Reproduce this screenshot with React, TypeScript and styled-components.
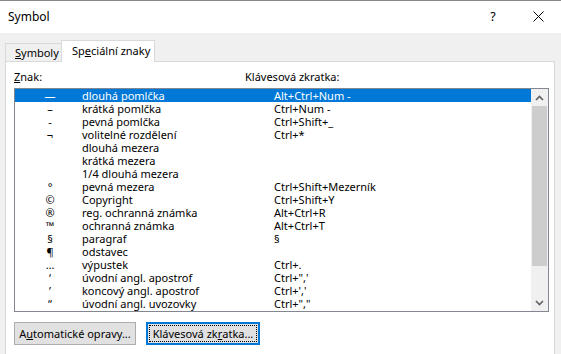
import React from 'react';
import styled, { createGlobalStyle } from 'styled-components';

const GlobalStyle = createGlobalStyle`
  html, body {
    margin: 0;
    padding: 0;
    background: #f0f0f0;
  }
  body {
    font-family: 'Noto Sans', 'Open Sans', sans-serif;
    font-size: 11px;
    color: #000;
  }
`;

interface IRow {
  glyph: string;
  name: string;
  shortcut: string;
}

const rows: IRow[] = [
  { glyph: '—', name: 'dlouhá pomlčka', shortcut: 'Alt+Ctrl+Num -' },
  { glyph: '–', name: 'krátká pomlčka', shortcut: 'Ctrl+Num -' },
  { glyph: '-', name: 'pevná pomlčka', shortcut: 'Ctrl+Shift+_' },
  { glyph: '¬', name: 'volitelné rozdělení', shortcut: 'Ctrl+*' },
  { glyph: '', name: 'dlouhá mezera', shortcut: '' },
  { glyph: '', name: 'krátká mezera', shortcut: '' },
  { glyph: '', name: '1/4 dlouhá mezera', shortcut: '' },
  { glyph: '°', name: 'pevná mezera', shortcut: 'Ctrl+Shift+Mezerník' },
  { glyph: '©', name: 'Copyright', shortcut: 'Ctrl+Shift+Y' },
  { glyph: '®', name: 'reg. ochranná známka', shortcut: 'Alt+Ctrl+R' },
  { glyph: '™', name: 'ochranná známka', shortcut: 'Alt+Ctrl+T' },
  { glyph: '§', name: 'paragraf', shortcut: '§' },
  { glyph: '¶', name: 'odstavec', shortcut: '' },
  { glyph: '…', name: 'výpustek', shortcut: 'Ctrl+.' },
  { glyph: '‘', name: 'úvodní angl. apostrof', shortcut: 'Ctrl+",\'' },
  { glyph: '’', name: 'koncový angl. apostrof', shortcut: "Ctrl+','" },
  { glyph: '“', name: 'úvodní angl. uvozovky', shortcut: 'Ctrl+","' },
];

const Chevron: React.FC<{ up?: boolean }> = ({ up }) => (
  <svg width="9" height="6" viewBox="0 0 9 6">
    <polyline
      points={up ? '1,5 4.5,1.5 8,5' : '1,1 4.5,4.5 8,1'}
      fill="none"
      stroke="#606060"
      strokeWidth="1.6"
    />
  </svg>
);

const App: React.FC = () => {
  return (
    <Window>
      <GlobalStyle />
      <TitleBar>
        <Title>Symbol</Title>
        <TitleButtons>
          <HelpButton>?</HelpButton>
          <CloseButton>
            <svg width="11" height="11" viewBox="0 0 11 11">
              <path d="M0.5 0.5 L10.5 10.5 M10.5 0.5 L0.5 10.5" stroke="#000" strokeWidth="1" />
            </svg>
          </CloseButton>
        </TitleButtons>
      </TitleBar>

      <Body>
        <TabStrip>
          <Tab>
            <Key>S</Key>ymboly
          </Tab>
          <Tab active>
            Sp<Key>e</Key>ciální znaky
          </Tab>
        </TabStrip>

        <Pane>
          <Headers>
            <span>
              <Key>Z</Key>nak:
            </span>
            <span>Klávesová zkratka:</span>
          </Headers>

          <ListBox>
            <Rows>
              {rows.map((r, i) => (
                <Row key={i} selected={i === 0}>
                  <Glyph>{r.glyph}</Glyph>
                  <Cell>{r.name}</Cell>
                  <Cell>{r.shortcut}</Cell>
                </Row>
              ))}
            </Rows>
            <ScrollBar>
              <ArrowBox>
                <Chevron up />
              </ArrowBox>
              <Track>
                <Thumb />
              </Track>
              <ArrowBox>
                <Chevron />
              </ArrowBox>
            </ScrollBar>
          </ListBox>

          <ButtonRow>
            <Button width={122}>
              A<Key>u</Key>tomatické opravy...
            </Button>
            <Button width={114} focused>
              <FocusRect>
                Klávesová zk<Key>r</Key>atka...
              </FocusRect>
            </Button>
          </ButtonRow>
        </Pane>
      </Body>
    </Window>
  );
};

export default App;

const Window = styled.div`
  width: 561px;
  height: 354px;
  overflow: hidden;
  display: flex;
  flex-direction: column;
  background: #f0f0f0;
`;

const TitleBar = styled.div`
  height: 32px;
  flex: none;
  border-top: 1px solid #888;
  background: #fff;
  display: flex;
  align-items: center;
  justify-content: space-between;
  padding-left: 8px;
`;

const Title = styled.span`
  font-size: 12px;
  margin-top: -1px;
`;

const TitleButtons = styled.div`
  display: flex;
  align-items: center;
  height: 100%;
`;

const HelpButton = styled.div`
  width: 46px;
  text-align: center;
  font-size: 12.5px;
  margin-top: -1px;
`;

const CloseButton = styled.div`
  width: 46px;
  display: flex;
  justify-content: center;
  margin-top: -1px;
  margin-left: -1px;
`;

const Body = styled.div`
  flex: 1;
  display: flex;
  flex-direction: column;
  padding-top: 7px;
`;

const TabStrip = styled.div`
  display: flex;
  align-items: flex-end;
  height: 21px;
  padding-left: 5px;
`;

const Tab = styled.div<{ active?: boolean }>`
  box-sizing: border-box;
  border: 1px solid #d9d9d9;
  border-bottom: none;
  background: ${(p) => (p.active ? '#fff' : '#f0f0f0')};
  height: ${(p) => (p.active ? 22 : 18)}px;
  width: ${(p) => (p.active ? 94 : 57)}px;
  margin-bottom: ${(p) => (p.active ? -1 : 0)}px;
  margin-right: ${(p) => (p.active ? 0 : -1)}px;
  padding-left: ${(p) => (p.active ? 10 : 9)}px;
  line-height: ${(p) => (p.active ? 20 : 18)}px;
  position: relative;
  z-index: ${(p) => (p.active ? 2 : 1)};
  white-space: nowrap;
`;

const Key = styled.u`
  text-decoration: underline;
  text-underline-offset: 1px;
`;

const Pane = styled.div`
  flex: 1;
  box-sizing: border-box;
  width: 550px;
  margin-left: 5px;
  border: 1px solid #d9d9d9;
  border-bottom: none;
  background: #fff;
  padding: 8px 5px 0 8px;
`;

const Headers = styled.div`
  display: grid;
  grid-template-columns: 231px 1fr;
  line-height: 13px;
  height: 13px;
`;

const ListBox = styled.div`
  margin-top: 5px;
  box-sizing: border-box;
  width: 535px;
  height: 224px;
  border: 1px solid #828790;
  display: flex;
`;

const Rows = styled.div`
  flex: 1;
  display: flex;
  flex-direction: column;
`;

const Row = styled.div<{ selected?: boolean }>`
  display: grid;
  grid-template-columns: 67px 192px 1fr;
  height: 13px;
  line-height: 13px;
  background: ${(p) => (p.selected ? '#0078d7' : 'transparent')};
  color: ${(p) => (p.selected ? '#fff' : '#000')};
  white-space: nowrap;
`;

const Glyph = styled.span`
  padding-left: 3px;
  text-align: center;
`;

const Cell = styled.span``;

const ScrollBar = styled.div`
  width: 17px;
  display: flex;
  flex-direction: column;
  background: #f0f0f0;
`;

const ArrowBox = styled.div`
  height: 17px;
  display: flex;
  align-items: center;
  justify-content: center;
`;

const Track = styled.div`
  flex: 1;
  padding: 0 1px;
`;

const Thumb = styled.div`
  height: 160px;
  background: #cdcdcd;
`;

const ButtonRow = styled.div`
  display: flex;
  gap: 10px;
  margin-top: 10px;
`;

const Button = styled.div<{ width: number; focused?: boolean }>`
  box-sizing: border-box;
  width: ${(p) => p.width}px;
  height: 23px;
  background: #e1e1e1;
  border: ${(p) => (p.focused ? '2px solid #0078d7' : '1px solid #adadad')};
  display: flex;
  align-items: center;
  justify-content: center;
  padding: 1px;
  white-space: nowrap;
`;

const FocusRect = styled.div`
  flex: 1;
  align-self: stretch;
  border: 1px dotted #000;
  display: flex;
  align-items: center;
  justify-content: center;
`;
